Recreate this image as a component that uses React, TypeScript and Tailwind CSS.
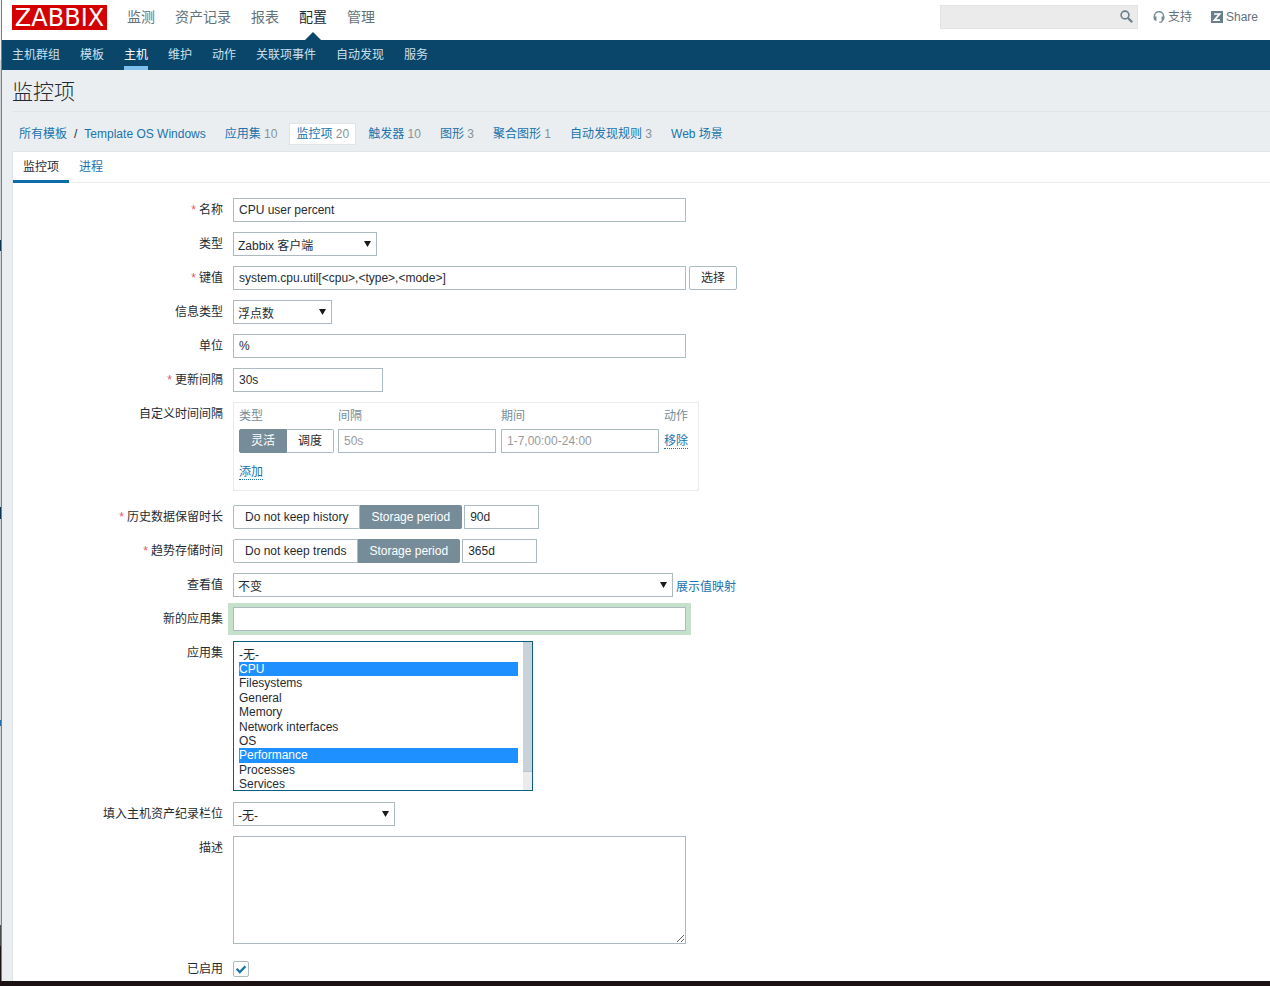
import type { ReactNode } from "react";

const BORDER = "border border-[#acbbc2]";
const FIELD = `${BORDER} h-6 bg-white px-[5px] text-xs text-[#1f2c33] placeholder-[#9a9a9a] outline-none`;
const LINK = "text-[#1a73ae]";
const DOTTED = "border-b border-dotted border-[#1a73ae] text-[#1a73ae] leading-[14px]";

const mainMenu = ["监测", "资产记录", "报表", "配置", "管理"];
const subMenu = ["主机群组", "模板", "主机", "维护", "动作", "关联项事件", "自动发现", "服务"];
const sections = [
  { name: "应用集", count: 10 },
  { name: "监控项", count: 20, active: true },
  { name: "触发器", count: 10 },
  { name: "图形", count: 3 },
  { name: "聚合图形", count: 1 },
  { name: "自动发现规则", count: 3 },
  { name: "Web 场景" },
];
const applications = [
  "-无-",
  "CPU",
  "Filesystems",
  "General",
  "Memory",
  "Network interfaces",
  "OS",
  "Performance",
  "Processes",
  "Services",
];

function Row({
  label,
  htmlFor,
  required,
  className = "",
  children,
}: {
  label: string;
  htmlFor?: string;
  required?: boolean;
  className?: string;
  children: ReactNode;
}) {
  return (
    <div className={`flex items-start gap-[10px] ${className}`}>
      <label htmlFor={htmlFor} className="w-[210px] shrink-0 text-right leading-6">
        {required && <span className="mr-[3px] text-[#e45959]">*</span>}
        {label}
      </label>
      <div className="flex items-start">{children}</div>
    </div>
  );
}

function Select({ id, width, value }: { id: string; width: string; value: string }) {
  return (
    <div className={`relative ${width}`}>
      <select
        id={id}
        defaultValue={value}
        className={`${BORDER} h-6 w-full appearance-none bg-white px-1 pt-1 text-xs text-[#1f2c33] outline-none`}
      >
        <option>{value}</option>
      </select>
      <svg
        viewBox="0 0 7 6"
        className="pointer-events-none absolute top-[9px] right-[6px] h-[6px] w-[7px]"
        aria-hidden="true"
      >
        <path d="M0 0h7L3.5 6z" fill="#1a1a1a" />
      </svg>
    </div>
  );
}

function Segmented({ name, options, selected }: { name: string; options: string[]; selected: number }) {
  return (
    <div className="flex">
      {options.map((option, i) => (
        <label
          key={option}
          className="relative flex h-6 cursor-pointer items-center border border-[#acbbc2] bg-white px-[11px] whitespace-nowrap not-first:border-l-0 first:rounded-l-[2px] last:rounded-r-[2px] has-checked:border-[#768d99] has-checked:bg-[#768d99] has-checked:text-white"
        >
          <input type="radio" name={name} defaultChecked={i === selected} className="sr-only" />
          {option}
        </label>
      ))}
    </div>
  );
}

function Header() {
  return (
    <header>
      <div className="flex h-10 items-start bg-white pr-3 pl-[10px]">
        <a
          href="#home"
          className="mt-[5px] flex h-[25px] w-[95px] items-center justify-center bg-[#d40000] font-['DejaVu_Sans',sans-serif] text-2xl leading-none text-white"
        >
          ZABBIX
        </a>
        <nav className="ml-5 flex gap-5 text-sm">
          {mainMenu.map((item) => (
            <a
              key={item}
              href="#menu"
              className={
                item === "配置"
                  ? "relative h-10 leading-[34px] text-[#1f2c33]"
                  : "h-10 leading-[34px] text-[#64727a]"
              }
            >
              {item}
              {item === "配置" && (
                <svg viewBox="0 0 16 8" className="absolute bottom-0 left-[6px] h-2 w-4" aria-hidden="true">
                  <path d="M8 0l8 8H0z" fill="#0a466a" />
                </svg>
              )}
            </a>
          ))}
        </nav>
        <form className="relative mt-[5px] ml-auto" onSubmit={(e) => e.preventDefault()}>
          <input
            type="search"
            aria-label="Search"
            className="h-6 w-[198px] appearance-none border border-[#e2e2e2] bg-[#ebebeb] pr-7 pl-[5px] text-xs outline-none"
          />
          <button type="submit" aria-label="Search" className="absolute top-[5px] right-[5px]">
            <svg viewBox="0 0 13 13" className="size-[13px]" fill="none" stroke="#6a7f8c" aria-hidden="true">
              <circle cx="5" cy="5" r="3.9" strokeWidth="1.6" />
              <path d="M8 8l4.2 4.2" strokeWidth="2.2" />
            </svg>
          </button>
        </form>
        <a href="#support" className="ml-[15px] flex items-center gap-[3px] leading-[34px] text-[#64727a]">
          <svg viewBox="0 0 12 12" className="size-3" fill="none" stroke="#768d99" aria-hidden="true">
            <path d="M1.4 7V5.2a4.6 4.4 0 0 1 9.2 0V7" strokeWidth="1.5" />
            <path d="M.7 5.6h2.8v4.2H2.2L.7 8.4zM8.5 5.6h2.8v2.8L9.8 9.8H8.5z" fill="#768d99" stroke="none" />
            <path d="M10 9l-1.5 2.2H6.2" strokeWidth="1.3" />
          </svg>
          支持
        </a>
        <a href="#share" className="ml-[19px] flex items-center gap-[3px] leading-[34px] text-[#64727a]">
          <svg viewBox="0 0 12 12" className="size-3" aria-hidden="true">
            <path d="M0 0h12v12H0z" fill="#6a7f8c" />
            <path d="M3 3h5.6L3.4 9.1H9" fill="none" stroke="#fff" strokeWidth="1.7" />
          </svg>
          Share
        </a>
      </div>
      <nav className="flex h-[30px] gap-5 bg-[#0a466a] px-[10px] leading-[30px]">
        {subMenu.map((item) => (
          <a
            key={item}
            href="#submenu"
            className={item === "主机" ? "border-b-4 border-[#7dc0ee] text-white" : "text-[#c9e0ee]"}
          >
            {item}
          </a>
        ))}
      </nav>
    </header>
  );
}

function Intervals() {
  return (
    <div className="border border-[#e6eaec] pr-[10px] pl-[5px]">
      <table className="border-collapse text-left">
        <thead>
          <tr className="h-[26px] text-[#768d99]">
            <th className="w-[99px] p-0 font-normal">类型</th>
            <th className="w-[163px] p-0 font-normal">间隔</th>
            <th className="w-[163px] p-0 font-normal">期间</th>
            <th className="p-0 font-normal">动作</th>
          </tr>
        </thead>
        <tbody>
          <tr>
            <td className="p-0">
              <Segmented name="interval-type" options={["灵活", "调度"]} selected={0} />
            </td>
            <td className="p-0">
              <input aria-label="间隔" placeholder="50s" className={`${FIELD} block w-[158px]`} />
            </td>
            <td className="p-0">
              <input aria-label="期间" placeholder="1-7,00:00-24:00" className={`${FIELD} block w-[158px]`} />
            </td>
            <td className="p-0">
              <button type="button" className={`${DOTTED} block`}>
                移除
              </button>
            </td>
          </tr>
          <tr className="h-[37px]">
            <td colSpan={4} className="p-0 pt-[2px]">
              <button type="button" className={`${DOTTED} block`}>
                添加
              </button>
            </td>
          </tr>
        </tbody>
      </table>
    </div>
  );
}

function ItemForm() {
  return (
    <form className="flex flex-col gap-[10px] pt-[15px]" onSubmit={(e) => e.preventDefault()}>
      <Row label="名称" htmlFor="name" required>
        <input id="name" defaultValue="CPU user percent" className={`${FIELD} w-[453px]`} />
      </Row>
      <Row label="类型" htmlFor="type">
        <Select id="type" width="w-36" value="Zabbix 客户端" />
      </Row>
      <Row label="键值" htmlFor="key" required>
        <input id="key" defaultValue="system.cpu.util[<cpu>,<type>,<mode>]" className={`${FIELD} w-[453px]`} />
        <button type="button" className={`${BORDER} ml-[3px] h-6 rounded-[2px] bg-white px-[11px]`}>
          选择
        </button>
      </Row>
      <Row label="信息类型" htmlFor="value-type">
        <Select id="value-type" width="w-[99px]" value="浮点数" />
      </Row>
      <Row label="单位" htmlFor="units">
        <input id="units" defaultValue="%" className={`${FIELD} w-[453px]`} />
      </Row>
      <Row label="更新间隔" htmlFor="delay" required>
        <input id="delay" defaultValue="30s" className={`${FIELD} w-[150px]`} />
      </Row>
      <Row label="自定义时间间隔" className="pb-1">
        <Intervals />
      </Row>
      <Row label="历史数据保留时长" htmlFor="history" required>
        <Segmented name="history-mode" options={["Do not keep history", "Storage period"]} selected={1} />
        <input id="history" defaultValue="90d" className={`${FIELD} ml-[2px] w-[75px]`} />
      </Row>
      <Row label="趋势存储时间" htmlFor="trends" required>
        <Segmented name="trends-mode" options={["Do not keep trends", "Storage period"]} selected={1} />
        <input id="trends" defaultValue="365d" className={`${FIELD} ml-[2px] w-[75px]`} />
      </Row>
      <Row label="查看值" htmlFor="valuemap">
        <Select id="valuemap" width="w-[440px]" value="不变" />
        <a href="#valuemaps" className={`${LINK} ml-[3px] h-6 pt-[2px] leading-6`}>
          展示值映射
        </a>
      </Row>
      <Row label="新的应用集" htmlFor="new-application">
        <input
          id="new-application"
          className={`${FIELD} w-[453px] shadow-[1px_0_0_4px_#c5e0cb,-1px_0_0_4px_#c5e0cb]`}
        />
      </Row>
      <Row label="应用集" htmlFor="applications" className="pb-px">
        <div className="flex h-[150px] w-[300px] border border-[#0a5f86] bg-white">
          <select
            id="applications"
            multiple
            defaultValue={["CPU", "Performance"]}
            className="h-full min-w-0 flex-1 overflow-y-hidden px-[5px] pt-[3px] text-xs text-[#1f2c33] outline-none"
          >
            {applications.map((name) => (
              <option
                key={name}
                className="p-0 checked:bg-[linear-gradient(#1e90ff,#1e90ff)] checked:text-white"
              >
                {name}
              </option>
            ))}
          </select>
          <div className="w-[9px] bg-[#ebebeb]" aria-hidden="true">
            <div className="h-[130px] border-b border-[#bcc4ca] bg-[#c9d1d9]" />
          </div>
        </div>
      </Row>
      <Row label="填入主机资产纪录栏位" htmlFor="inventory">
        <Select id="inventory" width="w-[162px]" value="-无-" />
      </Row>
      <Row label="描述" htmlFor="description" className="pb-[3px]">
        <textarea
          id="description"
          className={`${BORDER} block h-[108px] w-[453px] resize bg-white p-[5px] text-xs outline-none`}
        />
      </Row>
      <Row label="已启用" htmlFor="enabled">
        <div className="relative mt-1 size-4">
          <input
            id="enabled"
            type="checkbox"
            defaultChecked
            className="peer block size-4 appearance-none rounded-[2px] border border-[#acbbc2] bg-white"
          />
          <svg
            viewBox="0 0 16 16"
            className="pointer-events-none absolute inset-0 hidden size-4 peer-checked:block"
            aria-hidden="true"
          >
            <path d="M3.6 7.8l3.2 3.2 5.6-5.6" fill="none" stroke="#1a73ae" strokeWidth="2.3" />
          </svg>
        </div>
      </Row>
    </form>
  );
}

export default function App() {
  return (
    <div className="flex min-h-screen flex-col font-['Liberation_Sans','Noto_Sans_CJK_SC',sans-serif] text-xs text-[#1f2c33]">
      <div className="flex flex-1">
        <div className="w-[2px] shrink-0 border-r border-[#7c7f81] bg-[linear-gradient(#f2f2f2_0_60px,#cfd4d7_60px_240px,#0d3554_240px_251px,#cfd4d7_251px_507px,#0d3554_507px_519px,#cfd4d7_519px_720px,#2a6ea6_720px_726px,#cfd4d7_726px_925px,#4a4a4a_925px_946px,#1c1412_946px)]" />
        <div className="flex min-w-0 flex-1 flex-col bg-[#ebeef0]">
          <Header />
          <main className="flex flex-1 flex-col pl-[10px]">
            <h1 className="h-[42px] border-b border-[#dfe4e7] text-[21px] leading-[44px] font-light">监控项</h1>
            <nav className="flex h-[39px] items-center gap-[5px] pt-[5px]">
              <div className="flex">
                <a href="#templates" className={`${LINK} px-[7px]`}>
                  所有模板
                </a>
                <span>/</span>
                <a href="#template" className={`${LINK} px-[7px]`}>
                  Template OS Windows
                </a>
              </div>
              {sections.map((s) => (
                <a
                  key={s.name}
                  href="#section"
                  className={`${LINK} border px-[6px] leading-5 ${s.active ? "border-[#dfe4e7] bg-white" : "border-transparent"}`}
                >
                  {s.name}
                  {s.count !== undefined && <span className="text-[#87939a]"> {s.count}</span>}
                </a>
              ))}
            </nav>
            <section className="flex-1 border-t border-l border-[#dfe4e7] bg-white">
              <div role="tablist" className="flex h-[31px] border-b border-[#ebeef0]">
                <button
                  type="button"
                  role="tab"
                  aria-selected="true"
                  className="h-[31px] border-b-3 border-[#0f6cab] px-[10px] pt-[2px]"
                >
                  监控项
                </button>
                <button type="button" role="tab" aria-selected="false" className={`${LINK} h-[29px] px-[10px]`}>
                  进程
                </button>
              </div>
              <ItemForm />
            </section>
          </main>
        </div>
      </div>
      <div className="h-[5px] bg-[#1c1213]" />
    </div>
  );
}
